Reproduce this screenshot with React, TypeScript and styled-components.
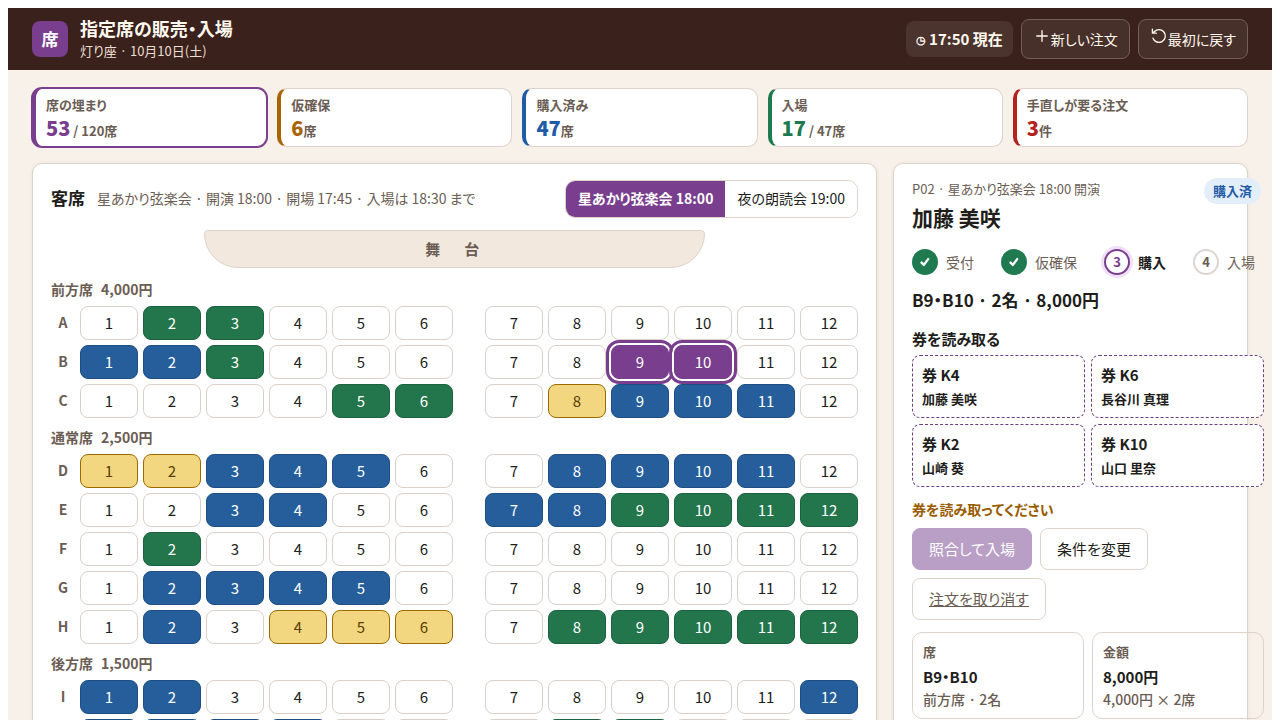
import React from "react";
import styled, { createGlobalStyle, css } from "styled-components";

const GlobalStyle = createGlobalStyle`
  *, *::before, *::after { box-sizing: border-box; }
  body {
    margin: 8px;
    background: #fff;
    color: #211d1a;
    font-family: "Noto Sans CJK JP", "Noto Sans", sans-serif;
    font-size: 15px;
    line-height: 1.5;
    font-feature-settings: "palt";
  }
  button { font: inherit; font-feature-settings: inherit; cursor: pointer; }
  h1, h2, h3, p, ul, ol, dl, dd { margin: 0; padding: 0; }
  ul, ol { list-style: none; }
`;

const Page = styled.div`
  background: #f7f1ea;
  padding-bottom: 24px;
`;

const Header = styled.header`
  display: flex;
  align-items: center;
  gap: 8px;
  height: 62px;
  padding: 0 24px;
  background: #3a211b;
  color: #fff8ef;
`;

const Logo = styled.div`
  display: grid;
  place-items: center;
  width: 36px;
  height: 36px;
  margin-right: 4px;
  border-radius: 8px;
  background: #7a3e8e;
  color: #fff;
  font-size: 17px;
  font-weight: 700;
`;

const Brand = styled.div`
  flex: 1;
`;

const BrandTitle = styled.h1`
  font-size: 18px;
  line-height: 23px;
  font-weight: 700;
`;

const BrandSub = styled.p`
  font-size: 13px;
  line-height: 21px;
  color: #eadfd3;
`;

const Clock = styled.div`
  display: flex;
  align-items: center;
  gap: 3px;
  height: 36px;
  padding: 0 10px;
  border-radius: 8px;
  background: #4b342d;
  font-size: 15px;
  font-weight: 700;

  span { font-size: 11px; }
`;

const HeaderButton = styled.button`
  height: 40px;
  padding: 0 11px 2px;
  border: 1px solid #735f58;
  border-radius: 8px;
  background: #47302a;
  color: #fff8ef;
  font-size: 14px;
`;

const Stats = styled.section`
  display: grid;
  grid-template-columns: repeat(5, minmax(0, 1fr));
  gap: 10px;
  padding: 18px 24px 0;
`;

const Stat = styled.button<{ $accent: string; $active?: boolean }>`
  height: 59px;
  padding: 4px 10px 0;
  text-align: left;
  border: 1px solid #ddd3c8;
  border-left: 4px solid ${(p) => p.$accent};
  border-radius: 10px;
  background: #fff;
  color: #6b5d54;
  ${(p) =>
    p.$active &&
    css`
      border-color: ${p.$accent};
      box-shadow: 0 0 0 1px ${p.$accent};
    `}
`;

const StatLabel = styled.span`
  display: block;
  font-size: 13px;
  line-height: 20px;
  font-weight: 700;
`;

const StatValue = styled.span<{ $accent: string }>`
  display: block;
  font-size: 13px;
  line-height: 26px;
  font-weight: 700;

  strong {
    color: ${(p) => p.$accent};
    font-size: 20px;
  }
`;

const Main = styled.main`
  display: grid;
  grid-template-columns: minmax(0, 1fr) 355px;
  gap: 16px;
  padding: 16px 24px 0;
`;

const Panel = styled.section`
  padding: 16px 18px;
  border: 1px solid #ddd3c8;
  border-radius: 10px;
  background: #fff;
  box-shadow: 0 1px 4px rgba(58, 33, 27, 0.08);
`;

const HallHead = styled.div`
  display: flex;
  align-items: center;
  gap: 12px;
  margin-bottom: 12px;
`;

const HallTitle = styled.h2`
  padding-bottom: 2px;
  font-size: 17px;
  font-weight: 700;
`;

const HallInfo = styled.p`
  flex: 1;
  padding-bottom: 2px;
  font-size: 14px;
  color: #6b5d54;
`;

const Segments = styled.div`
  display: flex;
  height: 38px;
  border: 1px solid #ddd3c8;
  border-radius: 10px;
  overflow: hidden;
`;

const Segment = styled.button<{ $active?: boolean }>`
  padding: 0 12px 2px;
  border: 0;
  background: ${(p) => (p.$active ? "#7a3e8e" : "#fff")};
  color: ${(p) => (p.$active ? "#fff" : "#211d1a")};
  font-size: 14px;
  font-weight: ${(p) => (p.$active ? 700 : 400)};
`;

const Stage = styled.div`
  display: grid;
  place-items: center;
  width: 62%;
  height: 38px;
  margin: 0 auto 12px;
  border: 1px solid #ddd3c8;
  border-radius: 4px 4px 36px 36px;
  background: #f2e8de;
  color: #6b5d54;
  font-size: 15px;
  font-weight: 700;
  letter-spacing: 0.3em;
`;

const Zone = styled.section`
  display: grid;
  gap: 5px;
  margin-bottom: 10px;
`;

const ZoneTitle = styled.h3`
  display: flex;
  gap: 8px;
  padding-bottom: 3px;
  font-size: 14px;
  line-height: 18px;
  font-weight: 700;
  color: #6b5d54;
`;

const SeatRow = styled.div`
  display: grid;
  grid-template-columns: 24px repeat(6, minmax(0, 1fr)) 22px repeat(6, minmax(0, 1fr));
  gap: 5px;
  align-items: center;
`;

const RowName = styled.span`
  padding-bottom: 2px;
  font-size: 14px;
  font-weight: 700;
  text-align: center;
  color: #6b5d54;
`;

type SeatState = "free" | "held" | "sold" | "entered" | "picked";

const seatColors: Record<SeatState, { bg: string; fg: string; line: string }> = {
  free: { bg: "#fff", fg: "#211d1a", line: "#d9d0c7" },
  held: { bg: "#f2d680", fg: "#5a3d00", line: "#9a6b00" },
  sold: { bg: "#255e9b", fg: "#fff", line: "#1d4f85" },
  entered: { bg: "#23754c", fg: "#fff", line: "#1b623f" },
  picked: { bg: "#7a3e8e", fg: "#fff", line: "#7a3e8e" },
};

const Seat = styled.button<{ $state: SeatState }>`
  height: 34px;
  padding: 0;
  border: 1px solid ${(p) => seatColors[p.$state].line};
  border-radius: 8px;
  background: ${(p) => seatColors[p.$state].bg};
  color: ${(p) => seatColors[p.$state].fg};
  font-size: 15px;
  ${(p) =>
    p.$state === "picked" &&
    css`
      box-shadow: 0 0 0 2px #fff;
      outline: 3px solid #7a3e8e;
      outline-offset: 2px;
    `}
`;

const OrderPanel = styled(Panel)`
  padding: 14px 18px;
`;

const OrderBody = styled.div`
  min-width: 352px;
`;

const OrderHead = styled.div`
  display: flex;
  justify-content: space-between;
  align-items: flex-start;
  padding-right: 3px;
`;

const OrderMeta = styled.p`
  font-size: 13px;
  line-height: 22px;
  color: #6b5d54;
`;

const Guest = styled.h2`
  font-size: 21px;
  line-height: 35px;
  font-weight: 700;
`;

const Badge = styled.span`
  padding: 0 9px 1px;
  border-radius: 13px;
  background: #e3eefb;
  color: #1f5ba6;
  font-size: 13px;
  line-height: 25px;
  font-weight: 700;
`;

const Steps = styled.ol`
  display: flex;
  gap: 27px;
  margin: 14px 0 12px;
`;

const Step = styled.li<{ $now?: boolean }>`
  display: flex;
  align-items: center;
  gap: 8px;
  font-size: 14px;
  line-height: 26px;
  font-weight: ${(p) => (p.$now ? 700 : 400)};
  color: ${(p) => (p.$now ? "#211d1a" : "#6b5d54")};
`;

const StepDot = styled.span<{ $kind: "done" | "now" | "next" }>`
  display: grid;
  place-items: center;
  width: 26px;
  height: 26px;
  border-radius: 50%;
  border: 2px solid #ddd6d0;
  background: #fff;
  font-size: 13px;
  line-height: 20px;
  font-weight: 700;
  ${(p) =>
    p.$kind === "done" &&
    css`
      border-color: #1f7a50;
      background: #1f7a50;
      color: #fff;
    `}
  ${(p) =>
    p.$kind === "now" &&
    css`
      border-color: #7a3e8e;
      color: #7a3e8e;
      box-shadow: 0 0 0 3px #f0e0f7;
    `}
`;

const Summary = styled.p`
  font-size: 17px;
  line-height: 26px;
  font-weight: 700;
`;

const ScanTitle = styled.h3`
  margin-top: 15px;
  font-size: 15px;
  line-height: 22px;
  font-weight: 700;
`;

const Tickets = styled.div`
  display: grid;
  grid-template-columns: repeat(2, minmax(0, 1fr));
  gap: 6px;
  margin-top: 5px;
`;

const Ticket = styled.button`
  display: grid;
  gap: 2px;
  padding: 8px 9px;
  border: 1px dashed #6d3d84;
  border-radius: 8px;
  background: #fff;
  color: #211d1a;
  text-align: left;
  font-size: 15px;
  line-height: 22px;
  font-weight: 700;

  small { font-size: 13px; line-height: 21px; }
`;

const Notice = styled.p`
  margin: 11px 0 8px;
  font-size: 14px;
  line-height: 22px;
  font-weight: 700;
  color: #9a5b00;
`;

const Actions = styled.div`
  display: flex;
  flex-wrap: wrap;
  gap: 8px;
  width: 317px;
`;

const Action = styled.button<{ $kind?: "primary" | "quiet" }>`
  height: 42px;
  padding: 0 16px;
  border: 1px solid #ddd3c8;
  border-radius: 8px;
  background: #fff;
  color: #211d1a;
  font-size: 15px;
  ${(p) =>
    p.$kind === "primary" &&
    css`
      border-color: #b99ec5;
      background: #b99ec5;
      color: #fff;
    `}
  ${(p) =>
    p.$kind === "quiet" &&
    css`
      color: #6b5d54;
      text-decoration: underline;
    `}
`;

const Facts = styled.dl`
  display: grid;
  grid-template-columns: repeat(2, minmax(0, 1fr));
  gap: 8px;
  margin-top: 12px;
`;

const Fact = styled.div`
  padding: 8px 10px;
  border: 1px solid #ddd3c8;
  border-radius: 10px;
  font-size: 14px;
  line-height: 22px;
  font-weight: 500;
  color: #6b5d54;

  dt { font-size: 13px; font-weight: 700; }
  dd:first-of-type {
    margin-top: 2px;
    font-size: 15px;
    line-height: 23px;
    font-weight: 700;
    color: #211d1a;
  }
`;

const Icon = ({ d, size = 18, width = 1.8 }: { d: string; size?: number; width?: number }) => (
  <svg
    width={size}
    height={size}
    viewBox="0 0 24 24"
    fill="none"
    stroke="currentColor"
    strokeWidth={width}
    strokeLinecap="round"
    strokeLinejoin="round"
    aria-hidden="true"
  >
    <path d={d} />
  </svg>
);

const PLUS = "M12 5v14M5 12h14";
const RESET = "M4 15a8.5 8.5 0 1 0 2-9L3.5 8M3.2 3v5.2h5.2";
const CHECK = "M6 13l4 4L17.5 7";

const stats = [
  { label: "席の埋まり", value: "53", unit: " / 120席", accent: "#7a3e8e" },
  { label: "仮確保", value: "6", unit: "席", accent: "#a86400" },
  { label: "購入済み", value: "47", unit: "席", accent: "#1f5ba6" },
  { label: "入場", value: "17", unit: " / 47席", accent: "#1f7a50" },
  { label: "手直しが要る注文", value: "3", unit: "件", accent: "#b3221c" },
];

// One letter per seat: . free, h held, s sold, e entered, p picked
const zones = [
  { name: "前方席", price: "4,000円", rows: { A: ".ee.........", B: "sse.....pp..", C: "....ee.hsss." } },
  {
    name: "通常席",
    price: "2,500円",
    rows: {
      D: "hhsss..ssss.",
      E: "..ss..sseeee",
      F: ".e..........",
      G: ".ssss.......",
      H: ".s.hhh.eeeee",
    },
  },
  { name: "後方席", price: "1,500円", rows: { I: "ss.........s", J: "ssss...ee..." } },
];

const stateOf: Record<string, SeatState> = {
  ".": "free",
  h: "held",
  s: "sold",
  e: "entered",
  p: "picked",
};

const tickets = [
  ["券 K4", "加藤 美咲"],
  ["券 K6", "長谷川 真理"],
  ["券 K2", "山崎 葵"],
  ["券 K10", "山口 里奈"],
];

export default function App() {
  return (
    <>
      <GlobalStyle />
      <Page lang="ja">
        <Header>
          <Logo>席</Logo>
          <Brand>
            <BrandTitle>指定席の販売・入場</BrandTitle>
            <BrandSub>灯り座 · 10月10日(土)</BrandSub>
          </Brand>
          <Clock><span>◷</span>17:50 現在</Clock>
          <HeaderButton><Icon d={PLUS} />新しい注文</HeaderButton>
          <HeaderButton><Icon d={RESET} />最初に戻す</HeaderButton>
        </Header>

        <Stats>
          {stats.map((s, i) => (
            <Stat key={s.label} $accent={s.accent} $active={i === 0}>
              <StatLabel>{s.label}</StatLabel>
              <StatValue $accent={s.accent}><strong>{s.value}</strong>{s.unit}</StatValue>
            </Stat>
          ))}
        </Stats>

        <Main>
          <Panel>
            <HallHead>
              <HallTitle>客席</HallTitle>
              <HallInfo>星あかり弦楽会 · 開演 18:00 · 開場 17:45 · 入場は 18:30 まで</HallInfo>
              <Segments>
                <Segment $active>星あかり弦楽会 18:00</Segment>
                <Segment>夜の朗読会 19:00</Segment>
              </Segments>
            </HallHead>
            <Stage>舞　台</Stage>
            {zones.map((z) => (
              <Zone key={z.name}>
                <ZoneTitle><span>{z.name}</span><span>{z.price}</span></ZoneTitle>
                {Object.entries(z.rows).map(([row, seats]) => (
                  <SeatRow key={row}>
                    <RowName>{row}</RowName>
                    {seats.split("").map((c, i) => (
                      <React.Fragment key={i}>
                        {i === 6 && <span />}
                        <Seat $state={stateOf[c]} aria-label={`${row}${i + 1}`}>{i + 1}</Seat>
                      </React.Fragment>
                    ))}
                  </SeatRow>
                ))}
              </Zone>
            ))}
          </Panel>

          <OrderPanel>
            <OrderBody>
              <OrderHead>
                <div>
                  <OrderMeta>P02 · 星あかり弦楽会 18:00 開演</OrderMeta>
                  <Guest>加藤 美咲</Guest>
                </div>
                <Badge>購入済</Badge>
              </OrderHead>
              <Steps>
                <Step><StepDot $kind="done"><Icon d={CHECK} size={14} width={4} /></StepDot>受付</Step>
                <Step><StepDot $kind="done"><Icon d={CHECK} size={14} width={4} /></StepDot>仮確保</Step>
                <Step $now><StepDot $kind="now">3</StepDot>購入</Step>
                <Step><StepDot $kind="next">4</StepDot>入場</Step>
              </Steps>
              <Summary>B9・B10 · 2名 · 8,000円</Summary>
              <ScanTitle>券を読み取る</ScanTitle>
              <Tickets>
                {tickets.map(([code, name]) => (
                  <Ticket key={code}>{code}<small>{name}</small></Ticket>
                ))}
              </Tickets>
              <Notice>券を読み取ってください</Notice>
              <Actions>
                <Action $kind="primary">照合して入場</Action>
                <Action>条件を変更</Action>
                <Action $kind="quiet">注文を取り消す</Action>
              </Actions>
              <Facts>
                <Fact><dt>席</dt><dd>B9・B10</dd><dd>前方席 · 2名</dd></Fact>
                <Fact><dt>金額</dt><dd>8,000円</dd><dd>4,000円 × 2席</dd></Fact>
              </Facts>
            </OrderBody>
          </OrderPanel>
        </Main>
      </Page>
    </>
  );
}
